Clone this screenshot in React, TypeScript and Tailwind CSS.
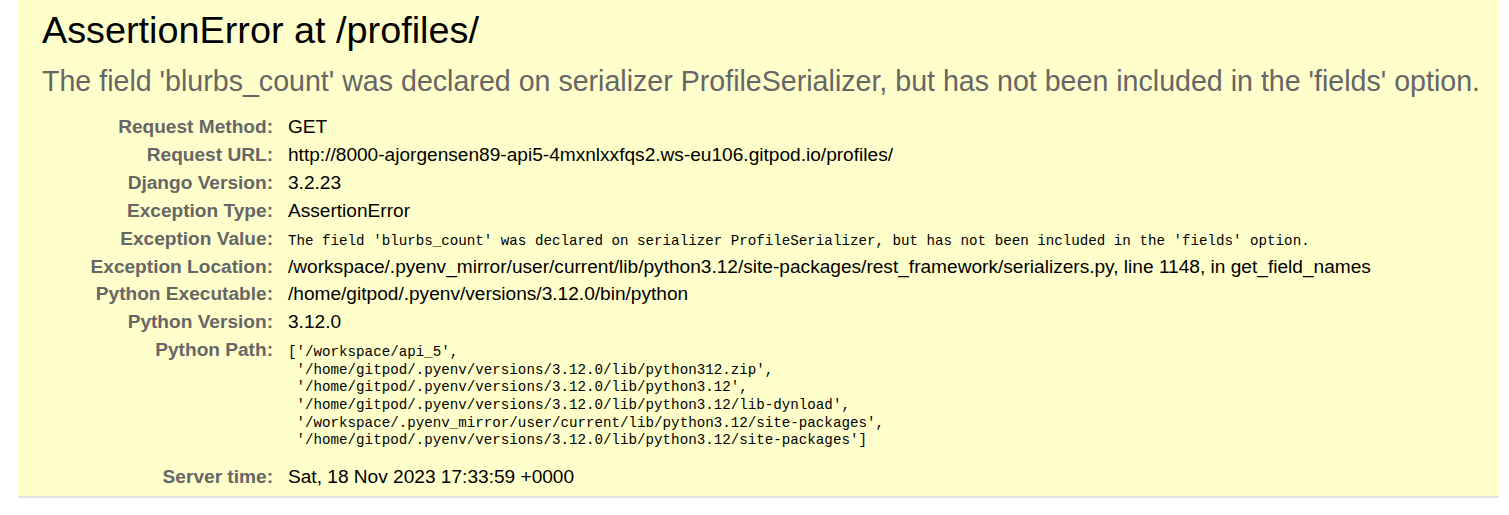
import React from 'react';

type Row = { label: string; value: string; mono?: boolean };

const rows: Row[] = [
  { label: 'Request Method:', value: 'GET' },
  { label: 'Request URL:', value: 'http://8000-ajorgensen89-api5-4mxnlxxfqs2.ws-eu106.gitpod.io/profiles/' },
  { label: 'Django Version:', value: '3.2.23' },
  { label: 'Exception Type:', value: 'AssertionError' },
  {
    label: 'Exception Value:',
    value:
      "The field 'blurbs_count' was declared on serializer ProfileSerializer, but has not been included in the 'fields' option.",
    mono: true,
  },
  {
    label: 'Exception Location:',
    value:
      '/workspace/.pyenv_mirror/user/current/lib/python3.12/site-packages/rest_framework/serializers.py, line 1148, in get_field_names',
  },
  { label: 'Python Executable:', value: '/home/gitpod/.pyenv/versions/3.12.0/bin/python' },
  { label: 'Python Version:', value: '3.12.0' },
];

const pythonPath = `['/workspace/api_5',
 '/home/gitpod/.pyenv/versions/3.12.0/lib/python312.zip',
 '/home/gitpod/.pyenv/versions/3.12.0/lib/python3.12',
 '/home/gitpod/.pyenv/versions/3.12.0/lib/python3.12/lib-dynload',
 '/workspace/.pyenv_mirror/user/current/lib/python3.12/site-packages',
 '/home/gitpod/.pyenv/versions/3.12.0/lib/python3.12/site-packages']`;

const sans = "font-['Liberation_Sans',Arial,sans-serif]";
const mono = "font-['Liberation_Mono','Courier_New',monospace]";

function MetaRow({ label, children, className = '' }: { label: string; children: React.ReactNode; className?: string }) {
  return (
    <div className={`flex items-baseline ${className}`}>
      <div className="w-[255px] shrink-0 text-right font-bold text-[#666] text-[19.1px] leading-[27.9px] whitespace-nowrap">
        {label}
      </div>
      <div className="pl-[15px] text-black text-[19.1px] leading-[27.9px]">{children}</div>
    </div>
  );
}

export default function App() {
  return (
    <div className={`w-full h-[515px] bg-white overflow-hidden ${sans}`}>
      <div className="ml-[18px] w-[1481px] bg-[#ffffcc] border-b-2 border-[#e2e2e2] pt-[9px] pb-[5px]">
        <h1 className="pl-[24px] text-[37.8px] leading-[42px] font-normal text-black whitespace-nowrap">
          AssertionError at /profiles/
        </h1>
        <h2 className="mt-[14px] pl-[24px] text-[28.6px] leading-[33px] font-normal text-[#666] whitespace-nowrap">
          The field 'blurbs_count' was declared on serializer ProfileSerializer, but has not been included in the 'fields' option.
        </h2>
        <div className="mt-[15px]">
          {rows.map((r) => (
            <MetaRow key={r.label} label={r.label}>
              {r.mono ? (
                <span className={`${mono} text-[14.2px] leading-[14px] whitespace-nowrap`}>{r.value}</span>
              ) : (
                <span className="whitespace-nowrap">{r.value}</span>
              )}
            </MetaRow>
          ))}
          <MetaRow label="Python Path:" className="pb-[13px]">
            <pre className={`${mono} text-[14.2px] leading-[17.6px] m-0 whitespace-pre`}>{pythonPath}</pre>
          </MetaRow>
          <MetaRow label="Server time:">Sat, 18 Nov 2023 17:33:59 +0000</MetaRow>
        </div>
      </div>
    </div>
  );
}
